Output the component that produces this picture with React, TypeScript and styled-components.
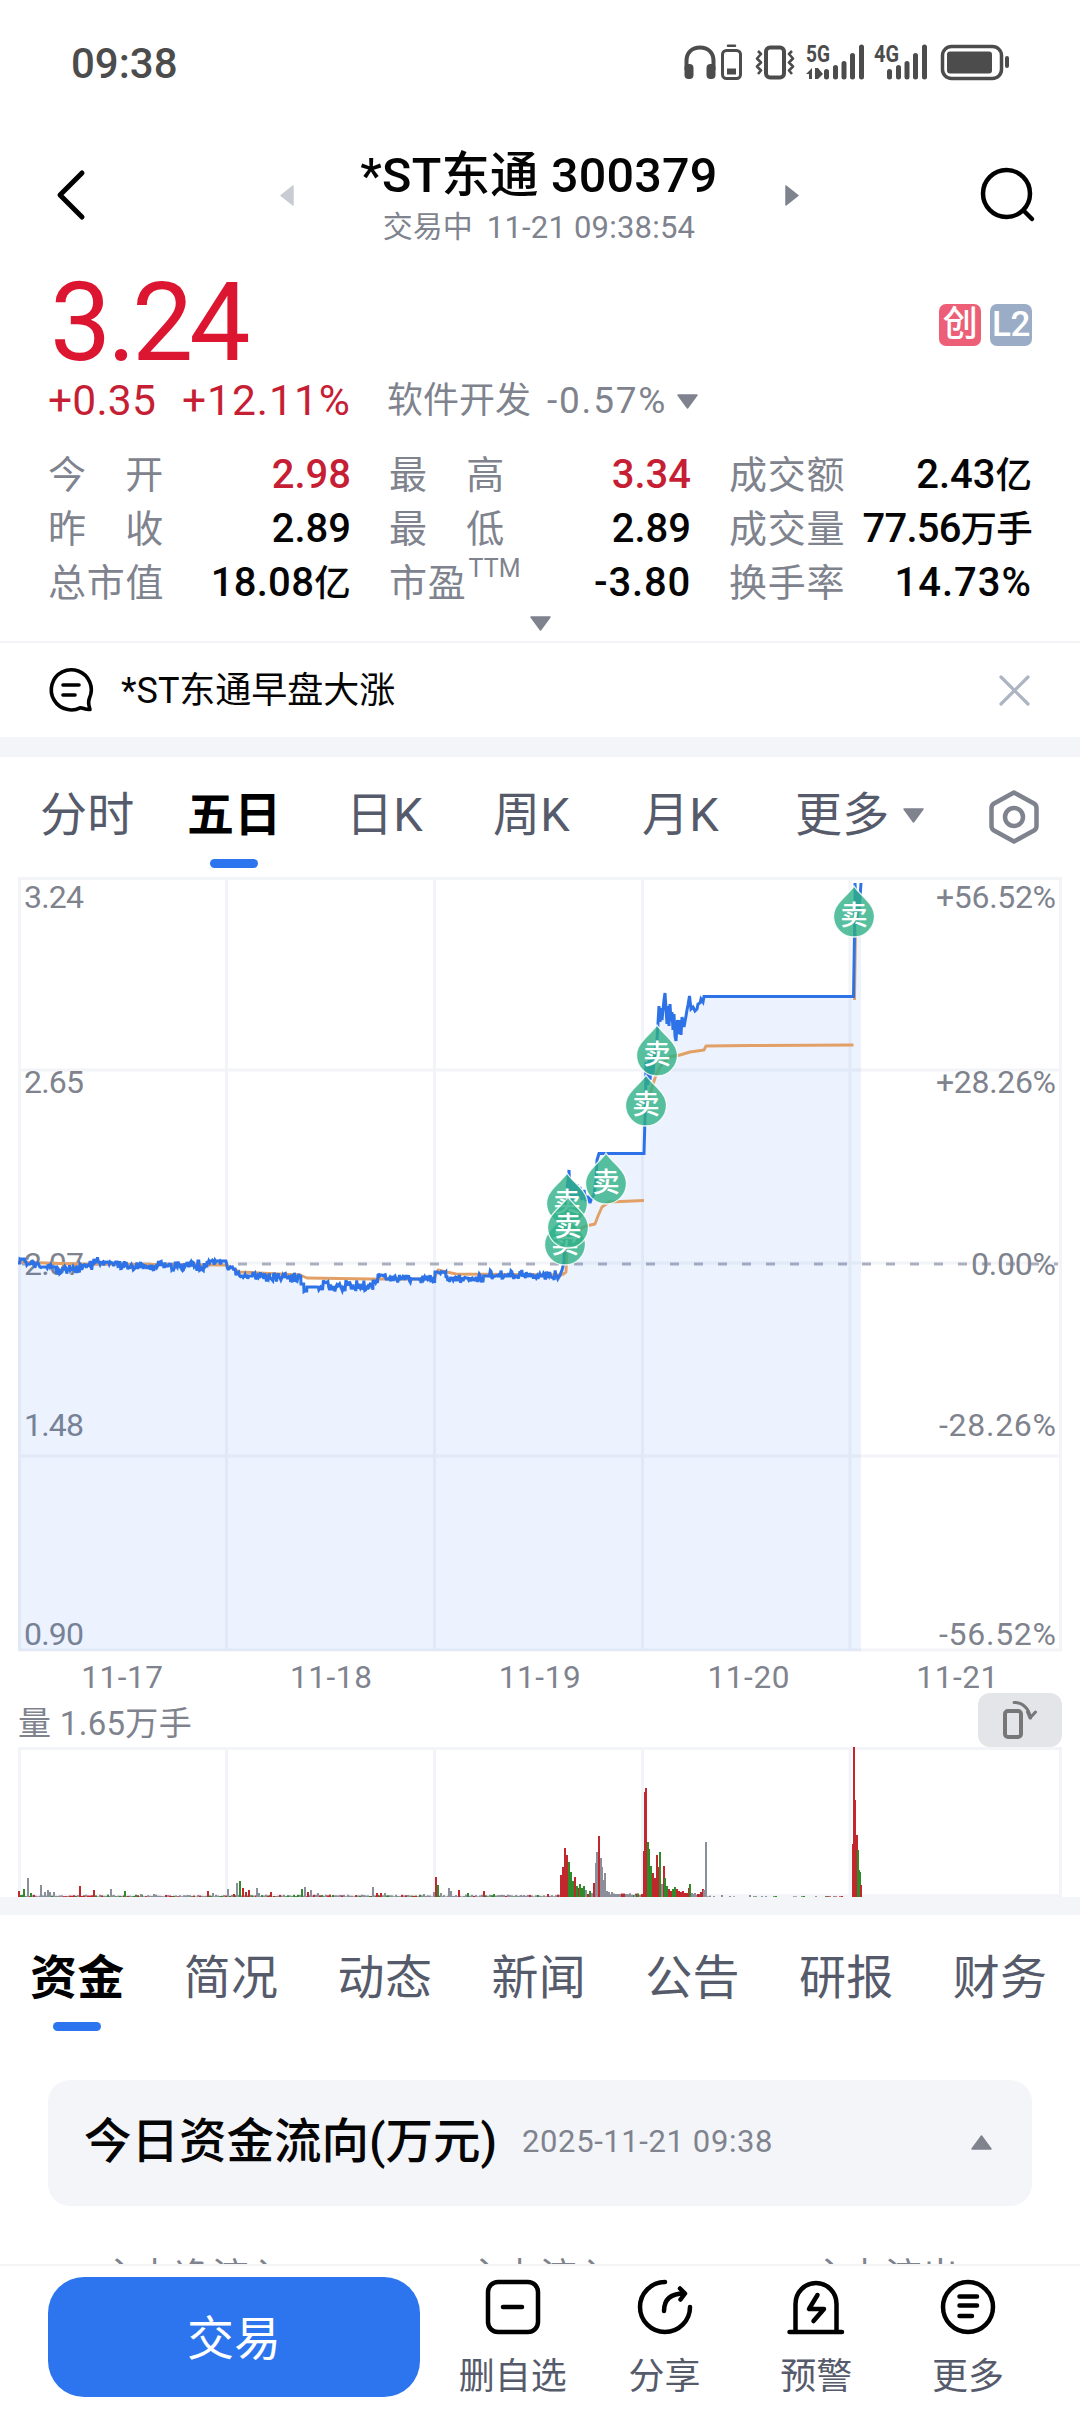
import React from "react";
import styled, { createGlobalStyle, css } from "styled-components";

const C = {
  red: "#dc1631",
  redText: "#c61f35",
  ink: "#050505",
  grey: "#7f838e",
  slate: "#565b6b",
  blue: "#2d75ef",
  band: "#f4f5f9",
  line: "#f3f4f8",
  orange: "#e2a067",
  green: "#2eb086",
};

const FONT = 'Roboto, "Noto Sans CJK SC", sans-serif';

const Global = createGlobalStyle`
  html, body { margin: 0; padding: 0; background: #fff; }
  * { box-sizing: border-box; }
  body { font-family: ${FONT}; color: ${C.ink}; overflow: hidden; }
  svg { display: block; overflow: visible; }
`;

interface TextProps {
  $size: number;
  $color?: string;
  $weight?: number;
  $gap?: number;
}

const Text = styled.span<TextProps>`
  display: block;
  white-space: nowrap;
  line-height: 1.2;
  font-size: ${(p) => p.$size}px;
  color: ${(p) => p.$color ?? C.ink};
  font-weight: ${(p) => p.$weight ?? 400};
  letter-spacing: ${(p) => p.$gap ?? 0}px;
`;

const Screen = styled.main`
  width: 1080px;
  height: 2412px;
  display: flex;
  flex-direction: column;
  overflow: hidden;
  background: #fff;
`;

const StatusBar = styled.div`
  flex: none;
  height: 126px;
  padding: 2px 68px 0 71px;
  display: flex;
  justify-content: space-between;
  align-items: center;
`;

const Header = styled.header`
  flex: none;
  height: 142px;
  padding: 0 45px 4px 56px;
  display: flex;
  justify-content: space-between;
  align-items: center;
`;

const Switcher = styled.div`
  display: flex;
  align-items: center;
  justify-content: space-between;
  width: 519px;
  margin-left: 11px;
`;

const TitleBlock = styled.div`
  display: flex;
  flex-direction: column;
  align-items: center;
  gap: 4px;
  padding-top: 3px;
`;

const SubTitle = styled.div`
  display: flex;
  gap: 14px;
`;

const Quote = styled.section`
  flex: none;
  height: 375px;
  padding: 0 48px;
  display: flex;
  flex-direction: column;
  border-bottom: 2px solid ${C.line};
`;

const PriceRow = styled.div`
  height: 106px;
  padding-left: 2px;
  display: flex;
  align-items: center;
  justify-content: space-between;
`;

const Price = styled(Text)`
  padding-top: 4px;
`;

const Badges = styled.div`
  display: flex;
  gap: 9px;
  padding-top: 7px;
`;

const Badge = styled.span<{ $bg: string }>`
  width: 42px;
  height: 42px;
  border-radius: 7px;
  background: ${(p) => p.$bg};
  color: #fff;
  font-size: 35px;
  font-weight: 500;
  line-height: 42px;
  text-align: center;
  letter-spacing: -0.5px;
`;

const ChangeRow = styled.div`
  height: 52px;
  display: flex;
  align-items: center;
`;

const ChangePercent = styled(Text)`
  margin-left: 26px;
`;

const Industry = styled.div`
  display: flex;
  align-items: center;
  gap: 16px;
  margin-left: 36px;
  padding-top: 3px;
`;

const IndustryTri = styled.div`
  margin-left: -6px;
`;

const Stats = styled.div`
  display: grid;
  grid-template-columns: 303px 302px 303px;
  column-gap: 38px;
  grid-auto-rows: 54px;
  margin-top: 22px;
`;

const Stat = styled.div`
  display: flex;
  align-items: center;
  justify-content: space-between;
`;

const StatLabel = styled.div`
  width: 116px;
  height: 54px;
  display: flex;
  align-items: center;
  justify-content: space-between;
  font-size: 38px;
  line-height: 54px;
  letter-spacing: 0.8px;
  color: ${C.grey};
  white-space: nowrap;
`;

const Sup = styled.sup`
  font-size: 25px;
  line-height: 26px;
  letter-spacing: 0;
  align-self: flex-start;
  margin-left: 2px;
`;

const Unit = styled.span`
  font-size: 36.500px;
`;

const Expander = styled.div`
  display: flex;
  justify-content: center;
  padding-top: 6px;
`;

const Banner = styled.section`
  flex: none;
  height: 94px;
  padding: 0 50px 0 49px;
  display: flex;
  align-items: center;
`;

const BannerText = styled(Text)`
  flex: 1;
  margin-left: 28px;
  padding-top: 4px;
`;

const Band = styled.div<{ $h: number }>`
  flex: none;
  height: ${(p) => p.$h}px;
  background: ${C.band};
`;

const ChartTabs = styled.nav`
  flex: none;
  height: 120px;
  padding: 0 40px;
  display: grid;
  grid-template-columns: 147px 159px 147px 149px 153px 194px 51px;
`;

const SectionTabs = styled.nav`
  flex: none;
  height: 165px;
  padding: 5px 30px 0 30px;
  display: grid;
  grid-template-columns: repeat(6, 153.8px) 1fr;
`;

const Tab = styled.button<{ $active?: boolean }>`
  justify-self: start;
  align-self: start;
  border: 0;
  padding: 0;
  background: none;
  font-family: inherit;
  font-size: 47px;
  letter-spacing: 0.3px;
  line-height: 56px;
  height: 112px;
  padding-top: 30px;
  color: ${(p) => (p.$active ? "#000" : C.slate)};
  font-weight: ${(p) => (p.$active ? 700 : 400)};
  white-space: nowrap;
  display: flex;
  flex-direction: column;
  align-items: center;
  ${(p) =>
    p.$active &&
    css`
      &::after {
        content: "";
        width: 48px;
        height: 9px;
        border-radius: 4.500px;
        background: ${C.blue};
        margin-top: 16px;
        flex: none;
      }
    `}
`;

const MoreLabel = styled.span`
  display: flex;
  align-items: center;
  gap: 13px;
`;

const Settings = styled.div`
  padding-top: 33px;
`;

const DateRow = styled.div`
  flex: none;
  height: 41px;
  padding: 7px 18px 0;
  display: grid;
  grid-template-columns: repeat(5, 1fr);
  justify-items: center;
  align-items: center;
`;

const VolumeHead = styled.div`
  flex: none;
  height: 54px;
  padding: 0 18px;
  display: flex;
  justify-content: space-between;
  align-items: center;
`;

const VolumeText = styled(Text)`
  padding-top: 8px;
`;

const RotateButton = styled.div`
  width: 84px;
  height: 54px;
  border-radius: 12px;
  background: #e4e5e9;
  display: flex;
  align-items: center;
  justify-content: center;
`;

const Plot = styled.svg`
  flex: none;
  width: 1080px;
  font-family: ${FONT};
`;

const FlowCard = styled.section`
  flex: none;
  height: 126px;
  margin: 0 48px;
  padding: 0 40px 2px 36px;
  border-radius: 22px;
  background: ${C.band};
  display: flex;
  align-items: center;
`;

const FlowDate = styled(Text)`
  flex: 1;
  margin-left: 25px;
`;

const FlowColumns = styled.div`
  flex: none;
  height: 58px;
  overflow: hidden;
  padding: 50px 90px 0 101px;
  display: grid;
  grid-template-columns: 365px 345px 1fr;
`;

const BottomBar = styled.footer`
  flex: none;
  height: 148px;
  padding: 0 31px 0 48px;
  display: flex;
  border-top: 2px solid #f3f4f6;
  background: #fff;
`;

const TradeButton = styled.button`
  margin-top: 11px;
  width: 372px;
  height: 120px;
  border: 0;
  border-radius: 36px;
  background: ${C.blue};
  color: #fff;
  font-family: inherit;
  font-size: 47px;
  padding: 0 0 5px;
`;

const Actions = styled.div`
  flex: 1;
  margin-left: 17px;
  display: grid;
  grid-template-columns: repeat(4, 151.700px);
`;

const Action = styled.div`
  display: flex;
  flex-direction: column;
  align-items: center;
  padding-top: 12px;
  gap: 20px;
`;

const Tri = ({ dir, color = C.grey }: { dir: "up" | "down" | "left" | "right"; color?: string }) => {
  const horizontal = dir === "left" || dir === "right";
  const d = {
    up: "M10.5 1L20 14H1Z",
    down: "M1 1H20L10.5 14Z",
    left: "M13 1V20L1 10.5Z",
    right: "M1 1V20L13 10.5Z",
  }[dir];
  return (
    <svg width={horizontal ? 14 : 21} height={horizontal ? 21 : 15}>
      <path d={d} fill={color} stroke={color} strokeWidth="1.5" strokeLinejoin="round" />
    </svg>
  );
};

const DARK = "#4c4c4c";

const StatusIcons = () => (
  <svg width="328" height="40" viewBox="0 0 328 40" fill="none" stroke={DARK}>
    <path d="M2.5 26V17C2.5 8 8.5 3.5 16 3.5S29.500 8 29.500 17V26" strokeWidth="4" />
    <rect x="0.500" y="20" width="9" height="15" rx="4" fill={DARK} stroke="none" />
    <rect x="22.500" y="20" width="9" height="15" rx="4" fill={DARK} stroke="none" />
    <rect x="38.500" y="6.500" width="18" height="28" rx="4" strokeWidth="3" />
    <path d="M44 1.800H51" strokeWidth="2.500" strokeLinecap="round" />
    <rect x="43" y="24.500" width="9" height="6" fill={DARK} stroke="none" />
    <rect x="82" y="3.500" width="18" height="30" rx="4" strokeWidth="4" />
    <path d="M74 7L77 10L73 14.500L77 18.500L73 22.500L77 26.500L74 30M108 7L105 10L109 14.500L105 18.500L109 22.500L105 26.500L108 30" strokeWidth="2.600" strokeLinejoin="round" />
    <text x="122" y="17.500" fontSize="24" fontWeight="700" fill={DARK} stroke="none" textLength="24" lengthAdjust="spacingAndGlyphs">5G</text>
    <path d="M122 30L128 24V35H125V30ZM131 24H134L139 30L134 35H131Z" fill={DARK} stroke="none" />
    <path d="M142.500 27.500V33M151.500 23.500V33M160 19.500V33M168.500 11.500V33M177.500 3V33" strokeWidth="5" strokeLinecap="round" />
    <text x="190" y="17.500" fontSize="24" fontWeight="700" fill={DARK} stroke="none" textLength="25" lengthAdjust="spacingAndGlyphs">4G</text>
    <path d="M205.500 27.500V33M214.500 23.500V33M223 19.500V33M231.500 11.500V33M240.500 3V33" strokeWidth="5" strokeLinecap="round" />
    <rect x="258.500" y="2.500" width="59" height="32" rx="9" strokeWidth="3.500" />
    <rect x="263" y="7.500" width="45" height="22" rx="3" fill={DARK} stroke="none" />
    <path d="M323 14V22" strokeWidth="4" strokeLinecap="round" />
  </svg>
);

/* ---------- chart data ---------- */

const makeNoise = (seed: number) => () => {
  seed = (seed * 1664525 + 1013904223) % 4294967296;
  return seed / 4294967296;
};

// from x, to x, level, upward swing, downward swing, density of swings
const calm: [number, number, number, number, number, number][] = [
  [18, 20, 1263, 0, 0, 0],
  [20, 25, 1259, 2, 1, 0.3],
  [25, 40, 1264, 3, 5, 0.5],
  [40, 56, 1267, 3, 2, 0.4],
  [56, 80, 1269, 4, 5, 0.9],
  [80, 93, 1265, 3, 5, 0.7],
  [93, 118, 1262, 5, 4, 0.6],
  [118, 170, 1266, 5, 4, 0.6],
  [170, 207, 1266, 5, 5, 0.9],
  [207, 227, 1261, 4, 4, 0.5],
  [227, 236, 1269, 3, 3, 0.6],
  [236, 262, 1276, 4, 4, 0.7],
  [262, 301, 1278, 5, 5, 0.8],
  [301, 304, 1284, 0, 0, 0],
  [304, 307, 1291, 0, 3, 0.8],
  [307, 318, 1287, 1, 2, 0.2],
  [318, 373, 1286, 6, 5, 0.9],
  [373, 378, 1281, 3, 2, 0.4],
  [378, 386, 1275, 5, 2, 0.5],
  [386, 435, 1279, 4, 4, 0.5],
  [435, 446, 1272, 2, 2, 0.4],
  [446, 484, 1278, 4, 5, 0.7],
  [484, 560, 1276, 6, 4, 0.6],
];

const buildPrice = () => {
  const rnd = makeNoise(17);
  const pts: string[] = [];
  calm.forEach(([a, b, level, up, down, density]) => {
    for (let x = a; x < b; x += 0.9) {
      const r = rnd();
      const s = rnd();
      let y = level;
      if (r < density) y = s < 0.5 ? level - up * rnd() : level + down * rnd();
      pts.push(`${x.toFixed(1)},${y.toFixed(1)}`);
    }
  });
  pts.push(
    "562,1270", "564,1262", "565,1235", "567,1190", "569,1170", "570,1195", "571,1180", "572,1200",
    "574,1182", "575,1196", "577,1184", "578,1198", "580,1187", "582,1200", "584,1190", "586,1201", "588,1196",
    "590,1203", "592,1197", "594,1195", "596,1180", "597,1160", "599,1153.500", "644,1153.500", "645.5,1100",
    "646,1062", "648,1085", "649,1060", "650,1080", "652,1055", "653,1074", "655,1050", "657,1040", "658,1023",
    "659,1006", "660,1022", "661,1008", "662,1020", "664,1000", "665,993", "666,1008", "667,1024", "668,1006",
    "669,1026", "670,1004", "671,1021", "672,1012", "673,1030", "674,1014", "675,1036", "676,1041", "677.5,1020",
    "679,1034", "680,1020", "681,1035", "682,1017", "684,1027", "686,1016", "687,1010", "688,1005", "689.5,996",
    "691,1009", "693,1007", "695,1011", "697,1009", "698,1004", "700,1003", "701,999", "703,1002", "704,996.500",
    "853.500,996.500", "855,900", "855,883", "857,925", "858,892", "859,912", "861,883",
  );
  return pts.join(" ");
};

const price = buildPrice();

const average = [
  "18,1262 60,1263.5 85,1264 226,1265 240,1272 300,1275 307,1278 370,1279 434,1279 438,1270 456,1274 562,1275",
  "562,1275 566,1272 567,1250 570,1234 586,1226 595,1224 598,1216 602,1207 609,1202 644,1200.5",
  "648,1100 655,1078 660,1067 669,1057 680,1055 690,1052 704,1050 706,1046 750,1045.5 853.500,1045",
  "854.500,1000 855.500,930",
];

const markers: [number, number][] = [
  [854, 886], [657, 1025], [646, 1075], [606, 1153], [567, 1173], [565, 1214], [568, 1197],
];

const R = "#c1272d";
const G = "#2f8a2a";
const N = "#8a8f9a";

// x, height, colour
const bars: [number, number, string][] = [
  [19, 6, R], [24, 8, G], [28, 19, N], [31, 4, G], [41, 12, N], [45, 5, N], [48, 7, N], [50, 5, N], [54, 5, N],
  [80, 11, R], [94, 7, R], [111, 8, N], [125, 6, G], [141, 3, N], [154, 3, N], [208, 6, R], [213, 4, N],
  [228, 8, N], [234, 3, R], [237, 14, N], [240, 16, G], [243, 9, R], [246, 5, R], [249, 7, R], [257, 9, N], [259, 4, N],
  [271, 5, R], [302, 8, G], [305, 10, N], [308, 5, R], [311, 7, N], [318, 4, N], [333, 2, G], [373, 10, N], [377, 4, R],
  [381, 4, R], [385, 4, N], [424, 3, N], [434, 5, N], [436, 20, R], [438, 12, G], [441, 4, N], [449, 9, N], [451, 6, N],
  [459, 7, R], [468, 4, G], [484, 6, R], [494, 3, G], [521, 2, N], [538, 2, G], [548, 3, R],
  [561, 22, R], [563, 30, R], [565, 49, R], [567, 42, R], [569, 35, G], [571, 25, G], [573, 16, G], [575, 20, R], [577, 11, G],
  [579, 9, R], [580, 13, G], [582, 9, G], [584, 11, G], [586, 7, N], [588, 3, R], [590, 6, G], [592, 4, N],
  [594, 14, R], [596, 34, N], [597, 45, N], [599, 61, R], [601, 39, N], [602, 30, N], [604, 17, N], [605, 24, N],
  [607, 6, N], [609, 5, N], [612, 5, N], [615, 3, N], [618, 3, N], [627, 2, N], [635, 2, N],
  [644, 46, R], [645, 105, R], [646, 109, R], [648, 55, G], [649, 48, G], [651, 31, G], [653, 24, R], [655, 19, R],
  [657, 42, R], [658, 30, R], [660, 45, G], [662, 13, N], [664, 31, R], [665, 19, G], [667, 11, G], [669, 8, R],
  [671, 6, R], [673, 8, G], [675, 10, G], [677, 8, R], [679, 6, R], [681, 5, R], [683, 6, R], [685, 4, R], [687, 4, R],
  [689, 9, R], [690, 13, G], [692, 4, N], [695, 4, N], [698, 3, R], [701, 5, R], [703, 8, R], [704, 7, N], [706, 55, N],
  [722, 2, N], [750, 2, N],
  [853, 53, R], [854, 150, R], [855, 97, R], [857, 62, R], [858, 47, G], [859, 27, G], [860, 25, G], [861, 12, R],
];

const buildFloor = () => {
  const rnd = makeNoise(5);
  const out: [number, number, string][] = [];
  for (let x = 20; x < 850; x += 2) {
    if (x > 710 && rnd() < 0.7) continue;
    const busy = x > 560 && x < 705;
    const r = rnd();
    out.push([x, (busy ? 2 : 0.6) + rnd() * (x > 710 ? 0.5 : 1.8), r < 0.17 ? R : r < 0.35 ? G : N]);
  }
  return out;
};

const floorBars = buildFloor();
const dayLines = [19.5, 226.5, 434.5, 642.5, 850, 1060.5];

const priceLabels: [string, string, number][] = [
  ["3.24", "+56.52%", 908],
  ["2.65", "+28.26%", 1093],
  ["2.07", "0.00%", 1275],
  ["1.48", "-28.26%", 1436],
  ["0.90", "-56.52%", 1645],
];

const Marker = ({ x, top }: { x: number; top: number }) => (
  <g transform={`translate(${x} ${top})`}>
    <path
      d="M0 0C3.500 7 20.500 17 20.500 30.200A20.500 20.800 0 0 1 -20.500 30.200C-20.500 17 -3.500 7 0 0Z"
      fill={C.green}
      fillOpacity="0.8"
      stroke="#fff"
      strokeOpacity="0.85"
      strokeWidth="1.300"
    />
    <text x="0" y="38.500" textAnchor="middle" fontSize="27.500" fontWeight="500" fill="#fff">卖</text>
  </g>
);

const PriceChart = () => (
  <Plot height={775} viewBox="0 877 1080 775">
    <g stroke={C.line} strokeWidth="3">
      {dayLines.map((x) => <path key={x} d={`M${x} 877V1651`} />)}
      {[878.5, 1070, 1263, 1456, 1650].map((y) => <path key={y} d={`M18 ${y}H1062`} />)}
    </g>
    <path d="M22 1264H1058" stroke="#a9afbd" strokeWidth="2.800" strokeDasharray="9 15" />
    {priceLabels.map(([value, pct, y]) => (
      <g key={value} fontSize="32" fill={C.grey}>
        <text x="24" y={y} textLength="60">{value}</text>
        <text x="1056" y={y} textAnchor="end" textLength={pct === "0.00%" ? 85 : pct[0] === "+" ? 120 : 117}>{pct}</text>
      </g>
    ))}
    <polygon points={`18,1651 ${price} 861,1651`} fill="#2d75ef" fillOpacity="0.09" />
    {average.map((p) => (
      <polyline key={p} points={p} fill="none" stroke={C.orange} strokeWidth="2.900" strokeLinejoin="round" />
    ))}
    <polyline points={price} fill="none" stroke="#2d72e6" strokeWidth="3" strokeLinejoin="miter" strokeMiterlimit="3" />
    {markers.map(([x, y]) => <Marker key={`${x}-${y}`} x={x} top={y} />)}
  </Plot>
);

const VolumeChart = () => (
  <Plot height={150} viewBox="0 0 1080 150">
    <g stroke={C.line} strokeWidth="3">
      {dayLines.map((x) => <path key={x} d={`M${x} 0V150`} />)}
      <path d="M18 1.500H1062M18 148.800H1062" />
    </g>
    {[...floorBars, ...bars].map(([x, h, fill], i) => (
      <rect key={i} x={x - 1} y={150 - h} width="2" height={h} fill={fill} />
    ))}
  </Plot>
);

/* ---------- content ---------- */

const stats: { label: string; sup?: string; value: string; unit?: string; up?: boolean; gap?: number }[] = [
  { label: "今开", value: "2.98", up: true },
  { label: "最高", value: "3.34", up: true },
  { label: "成交额", value: "2.43", unit: "亿" },
  { label: "昨收", value: "2.89" },
  { label: "最低", value: "2.89" },
  { label: "成交量", value: "77.56", unit: "万手", gap: -0.8 },
  { label: "总市值", value: "18.08", unit: "亿", gap: 0.3 },
  { label: "市盈", sup: "TTM", value: "-3.80", gap: 0.8 },
  { label: "换手率", value: "14.73%", gap: 1 },
];

const actions = [
  {
    name: "删自选",
    icon: (
      <>
        <rect x="4" y="4" width="50" height="50" rx="10" />
        <path d="M19 29H38" />
      </>
    ),
  },
  {
    name: "分享",
    icon: (
      <>
        <path d="M29 4A25 25 0 1 0 54 29" />
        <path d="M28 33C28 22 34 15.500 48 15.500M44 10.500L49 15.500L44.500 21.500" />
      </>
    ),
  },
  {
    name: "预警",
    icon: (
      <>
        <path d="M2.500 54H55M8.500 54V26A20.500 21 0 0 1 49.500 26V54" />
        <path d="M30.500 17L22 31H37L26.500 43" />
      </>
    ),
  },
  {
    name: "更多",
    icon: (
      <>
        <circle cx="29" cy="29" r="25" />
        <path d="M20.500 18.500H38M20.500 27.500H38M20.500 38H33" />
      </>
    ),
  },
];

export default function App() {
  return (
    <Screen>
      <Global />
      <StatusBar>
        <Text $size={42} $weight={500} $color={DARK}>09:38</Text>
        <StatusIcons />
      </StatusBar>

      <Header>
        <svg width="30" height="50" fill="none" stroke="#000" strokeWidth="5" strokeLinecap="round" strokeLinejoin="round">
          <path d="M26 3L4 25L26 47" />
        </svg>
        <Switcher>
          <Tri dir="left" color="#c9cbd3" />
          <TitleBlock>
            <Text $size={48.5} $weight={500} $gap={0.2}>*ST东通 300379</Text>
            <SubTitle>
              <Text $size={30} $color={C.grey}>交易中</Text>
              <Text $size={31} $color={C.grey} $gap={0.2}>11-21 09:38:54</Text>
            </SubTitle>
          </TitleBlock>
          <Tri dir="right" />
        </Switcher>
        <svg width="54" height="54" fill="none" stroke="#000" strokeWidth="4.500" strokeLinecap="round">
          <circle cx="25.500" cy="25.500" r="23.500" />
          <path d="M43 43L51 51" />
        </svg>
      </Header>

      <Quote>
        <PriceRow>
          <Price $size={109} $color={C.red} $gap={-4}>3.24</Price>
          <Badges>
            <Badge $bg="#ec5f76">创</Badge>
            <Badge $bg="#9badc6">L2</Badge>
          </Badges>
        </PriceRow>
        <ChangeRow>
          <Text $size={42.5} $color={C.redText} $gap={0.2}>+0.35</Text>
          <ChangePercent $size={42.5} $color={C.redText} $gap={1}>+12.11%</ChangePercent>
          <Industry>
            <Text $size={36} $color={C.grey}>软件开发</Text>
            <Text $size={37} $color={C.grey} $gap={1.8}>-0.57%</Text>
            <IndustryTri><Tri dir="down" /></IndustryTri>
          </Industry>
        </ChangeRow>
        <Stats>
          {stats.map((s) => (
            <Stat key={s.label}>
              <StatLabel>
                {s.label.length === 2 && !s.sup ? [...s.label].map((ch) => <span key={ch}>{ch}</span>) : s.label}
                {s.sup && <Sup>{s.sup}</Sup>}
              </StatLabel>
              <Text $size={40} $weight={500} $color={s.up ? C.redText : C.ink} $gap={s.gap}>
                {s.value}
                {s.unit && <Unit>{s.unit}</Unit>}
              </Text>
            </Stat>
          ))}
        </Stats>
        <Expander>
          <Tri dir="down" />
        </Expander>
      </Quote>

      <Banner>
        <svg width="44" height="44" fill="none" stroke="#000" strokeWidth="3.600" strokeLinecap="round" strokeLinejoin="round">
          <path d="M41 41.500C36 42 34 39.500 31 39.800C27 42 22 42.500 18 41.300A20 20 0 1 1 40.500 30C38.500 35 40 38 41 41.500Z" />
          <path d="M14 17H30M14 27H26" />
        </svg>
        <BannerText $size={36}>*ST东通早盘大涨</BannerText>
        <svg width="31" height="31" stroke="#adb5c2" strokeWidth="3.200" strokeLinecap="round">
          <path d="M2 2L29 29M29 2L2 29" />
        </svg>
      </Banner>

      <Band $h={20} />

      <ChartTabs>
        <Tab>分时</Tab>
        <Tab $active>五日</Tab>
        <Tab>日K</Tab>
        <Tab>周K</Tab>
        <Tab>月K</Tab>
        <Tab>
          <MoreLabel>更多<Tri dir="down" /></MoreLabel>
        </Tab>
        <Settings>
          <svg width="50" height="54" fill="none" stroke={C.grey} strokeWidth="4.500" strokeLinejoin="round">
            <path d="M25 2.500L45 13.500Q47.500 15 47.500 18V36Q47.500 39 45 40.500L25 51.500L5 40.500Q2.500 39 2.500 36V18Q2.500 15 5 13.500Z" />
            <circle cx="25" cy="27" r="9" />
          </svg>
        </Settings>
      </ChartTabs>

      <PriceChart />

      <DateRow>
        {["11-17", "11-18", "11-19", "11-20", "11-21"].map((d) => (
          <Text key={d} $size={31.5} $color={C.grey} $gap={0.6}>{d}</Text>
        ))}
      </DateRow>

      <VolumeHead>
        <VolumeText $size={33} $color={C.grey} $gap={0.3}>量 1.65万手</VolumeText>
        <RotateButton>
          <svg width="36" height="40" fill="none" stroke="#777" strokeWidth="4" strokeLinecap="round" strokeLinejoin="round">
            <rect x="3" y="11" width="16" height="26" rx="3" />
            <path d="M12 2.500C20 2 27 8 28.500 18M28 18L33.500 12M28 18L25.500 12" strokeWidth="3" />
          </svg>
        </RotateButton>
      </VolumeHead>

      <VolumeChart />
      <Band $h={18} />

      <SectionTabs>
        {["资金", "简况", "动态", "新闻", "公告", "研报", "财务"].map((t, i) => (
          <Tab key={t} $active={i === 0}>{t}</Tab>
        ))}
      </SectionTabs>

      <FlowCard>
        <Text $size={47.5} $weight={500}>今日资金流向(万元)</Text>
        <FlowDate $size={31} $color={C.grey} $gap={0.6}>2025-11-21 09:38</FlowDate>
        <Tri dir="up" />
      </FlowCard>
      <FlowColumns>
        {["主力净流入", "主力流入", "主力流出"].map((t) => (
          <Text key={t} $size={37} $color={C.grey}>{t}</Text>
        ))}
      </FlowColumns>

      <BottomBar>
        <TradeButton>交易</TradeButton>
        <Actions>
          {actions.map((a) => (
            <Action key={a.name}>
              <svg width="58" height="58" fill="none" stroke="#000" strokeWidth="4.500" strokeLinecap="round" strokeLinejoin="round">
                {a.icon}
              </svg>
              <Text $size={36} $color={C.slate}>{a.name}</Text>
            </Action>
          ))}
        </Actions>
      </BottomBar>
    </Screen>
  );
}
